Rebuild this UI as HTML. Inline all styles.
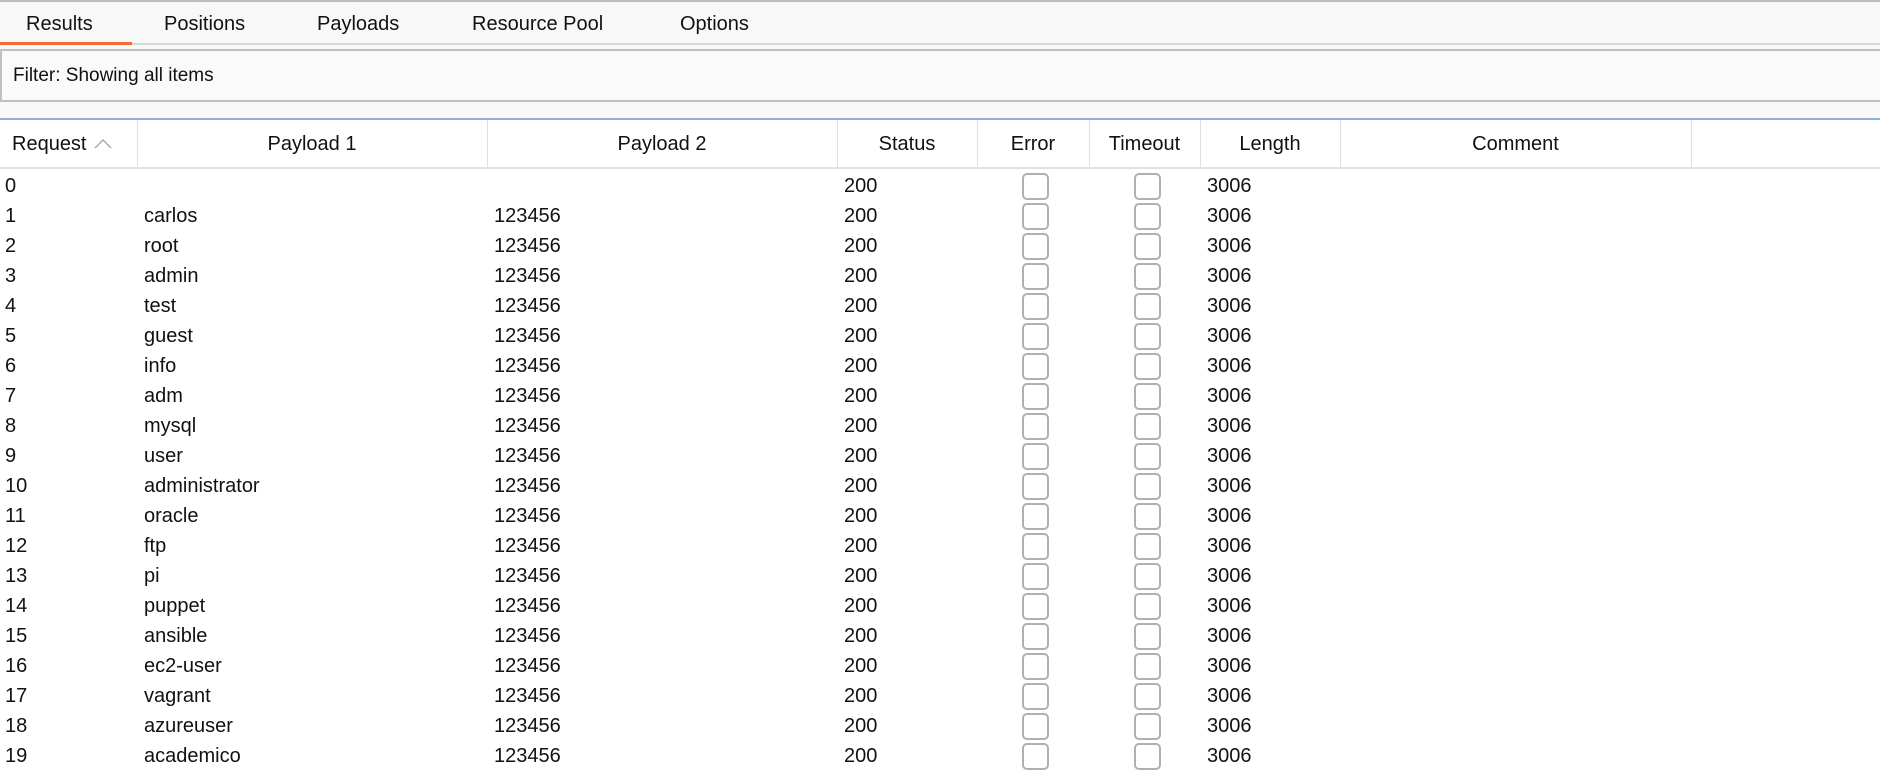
<!DOCTYPE html>
<html><head><meta charset="utf-8"><style>
*{margin:0;padding:0;box-sizing:border-box}
body{width:1880px;height:756px;overflow:hidden;background:#fff;font-family:"Liberation Sans",Arial,sans-serif;color:#111;position:relative}
.top{position:absolute;left:0;top:0;width:1880px;height:119px;background:#f8f8f8;border-top:2px solid #bdbdbd}
.tab{position:absolute;top:11px;font-size:20px}
.ul{position:absolute;left:0;top:42px;width:132px;height:3px;background:#f26a35}
.tl{position:absolute;left:132px;top:43px;width:1748px;height:2px;background:#d6d6d6}
.filter{position:absolute;left:0;top:49px;width:1882px;height:53px;border:2px solid #c0c0c0;background:#fafafa;font-size:19px;padding:14px 0 0 11px}
.blue{position:absolute;left:0;top:118px;width:1880px;height:2px;background:#8cb0d8}
.hdr{position:absolute;left:0;top:120px;width:1880px;height:49px;background:#fff;border-bottom:2px solid #e2e2e2}
.h{position:absolute;top:13px;font-size:20px;text-align:center;line-height:22px}
.vl{position:absolute;top:120px;width:1px;height:49px;background:#e0e0e0}
table{position:absolute;left:0;top:171px;border-collapse:collapse;font-size:20px;table-layout:fixed;width:1880px}
td{height:30px;padding:0;vertical-align:middle;white-space:nowrap;text-align:left;overflow:hidden}
td.a{padding-left:5px}
.cb{display:block;width:27px;height:27px;border:2px solid #b0b0b0;border-radius:5px;background:#fff}
</style></head><body>
<div class="top">
<div class="tab" style="left:26px">Results</div>
<div class="tab" style="left:164px">Positions</div>
<div class="tab" style="left:317px">Payloads</div>
<div class="tab" style="left:472px">Resource Pool</div>
<div class="tab" style="left:680px">Options</div>
</div>
<div class="ul"></div><div class="tl"></div>
<div class="filter">Filter: Showing all items</div>
<div class="blue"></div>
<div class="hdr">
<div class="h" style="left:12px">Request <svg width="18" height="12" viewBox="0 0 18 12" style="margin-left:2px"><path d="M1 10 L9 2 L17 10" fill="none" stroke="#aaa" stroke-width="1.5"/></svg></div>
<div class="h" style="left:137px;width:350px">Payload 1</div>
<div class="h" style="left:487px;width:350px">Payload 2</div>
<div class="h" style="left:837px;width:140px">Status</div>
<div class="h" style="left:977px;width:112px">Error</div>
<div class="h" style="left:1089px;width:111px">Timeout</div>
<div class="h" style="left:1200px;width:140px">Length</div>
<div class="h" style="left:1340px;width:351px">Comment</div>
</div>
<div class="vl" style="left:137px"></div><div class="vl" style="left:487px"></div><div class="vl" style="left:837px"></div><div class="vl" style="left:977px"></div><div class="vl" style="left:1089px"></div><div class="vl" style="left:1200px"></div><div class="vl" style="left:1340px"></div><div class="vl" style="left:1691px"></div>
<table>
<colgroup><col style="width:144px"><col style="width:350px"><col style="width:350px"><col style="width:178px"><col style="width:112px"><col style="width:73px"><col style="width:673px"></colgroup>
<tr><td class="a">0</td><td></td><td></td><td>200</td><td><i class="cb"></i></td><td><i class="cb"></i></td><td>3006</td></tr>
<tr><td class="a">1</td><td>carlos</td><td>123456</td><td>200</td><td><i class="cb"></i></td><td><i class="cb"></i></td><td>3006</td></tr>
<tr><td class="a">2</td><td>root</td><td>123456</td><td>200</td><td><i class="cb"></i></td><td><i class="cb"></i></td><td>3006</td></tr>
<tr><td class="a">3</td><td>admin</td><td>123456</td><td>200</td><td><i class="cb"></i></td><td><i class="cb"></i></td><td>3006</td></tr>
<tr><td class="a">4</td><td>test</td><td>123456</td><td>200</td><td><i class="cb"></i></td><td><i class="cb"></i></td><td>3006</td></tr>
<tr><td class="a">5</td><td>guest</td><td>123456</td><td>200</td><td><i class="cb"></i></td><td><i class="cb"></i></td><td>3006</td></tr>
<tr><td class="a">6</td><td>info</td><td>123456</td><td>200</td><td><i class="cb"></i></td><td><i class="cb"></i></td><td>3006</td></tr>
<tr><td class="a">7</td><td>adm</td><td>123456</td><td>200</td><td><i class="cb"></i></td><td><i class="cb"></i></td><td>3006</td></tr>
<tr><td class="a">8</td><td>mysql</td><td>123456</td><td>200</td><td><i class="cb"></i></td><td><i class="cb"></i></td><td>3006</td></tr>
<tr><td class="a">9</td><td>user</td><td>123456</td><td>200</td><td><i class="cb"></i></td><td><i class="cb"></i></td><td>3006</td></tr>
<tr><td class="a">10</td><td>administrator</td><td>123456</td><td>200</td><td><i class="cb"></i></td><td><i class="cb"></i></td><td>3006</td></tr>
<tr><td class="a">11</td><td>oracle</td><td>123456</td><td>200</td><td><i class="cb"></i></td><td><i class="cb"></i></td><td>3006</td></tr>
<tr><td class="a">12</td><td>ftp</td><td>123456</td><td>200</td><td><i class="cb"></i></td><td><i class="cb"></i></td><td>3006</td></tr>
<tr><td class="a">13</td><td>pi</td><td>123456</td><td>200</td><td><i class="cb"></i></td><td><i class="cb"></i></td><td>3006</td></tr>
<tr><td class="a">14</td><td>puppet</td><td>123456</td><td>200</td><td><i class="cb"></i></td><td><i class="cb"></i></td><td>3006</td></tr>
<tr><td class="a">15</td><td>ansible</td><td>123456</td><td>200</td><td><i class="cb"></i></td><td><i class="cb"></i></td><td>3006</td></tr>
<tr><td class="a">16</td><td>ec2-user</td><td>123456</td><td>200</td><td><i class="cb"></i></td><td><i class="cb"></i></td><td>3006</td></tr>
<tr><td class="a">17</td><td>vagrant</td><td>123456</td><td>200</td><td><i class="cb"></i></td><td><i class="cb"></i></td><td>3006</td></tr>
<tr><td class="a">18</td><td>azureuser</td><td>123456</td><td>200</td><td><i class="cb"></i></td><td><i class="cb"></i></td><td>3006</td></tr>
<tr><td class="a">19</td><td>academico</td><td>123456</td><td>200</td><td><i class="cb"></i></td><td><i class="cb"></i></td><td>3006</td></tr>
</table>
</body></html>
